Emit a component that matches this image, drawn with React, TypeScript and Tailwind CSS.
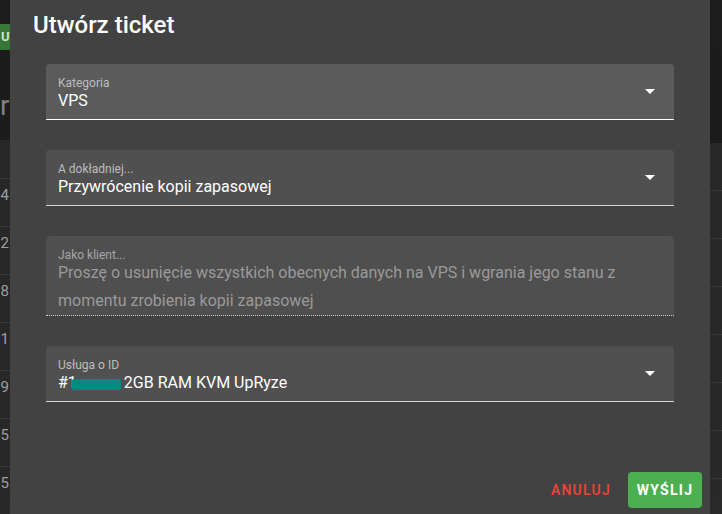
import React from "react";

function Arrow() {
  return (
    <svg width="10" height="5" viewBox="0 0 10 5" className="shrink-0">
      <path d="M0 0 L10 0 L5 5 Z" fill="#ffffff" />
    </svg>
  );
}

function SelectField({
  label,
  children,
  bg,
  line,
}: {
  label: string;
  children: React.ReactNode;
  bg: string;
  line: string;
}) {
  return (
    <div className={`flex h-[56px] items-center rounded-t-[4px] border-b ${bg} ${line} pl-[12px] pr-[19px]`}>
      <div className="flex h-full flex-1 flex-col pt-[11px]">
        <div className="text-[12px] leading-4 text-[#bdbdbd]">{label}</div>
        <div className="whitespace-nowrap text-[16px] leading-5 text-white">{children}</div>
      </div>
      <Arrow />
    </div>
  );
}

export default function App() {
  const leftDigits = ["4", "2", "8", "1", "9", "5", "5"];
  return (
    <div
      className="relative h-[514px] w-[722px] overflow-hidden bg-[#2b2b2b]"
      style={{ fontFamily: "Roboto, 'Noto Sans', sans-serif" }}
    >
      {/* background page */}
      <div className="flex h-full w-full justify-between">
        <div className="flex w-[10px] flex-col overflow-hidden">
          <div className="flex h-[143px] flex-col bg-[#1e1e1e]">
            <div className="mt-[24px] flex h-[26px] items-center bg-[#3b7a3b] pl-[1px] text-[13px] font-bold text-[#d8e8d8]">
              UT
            </div>
            <div className="mt-[40px] whitespace-nowrap text-[28px] leading-8 text-[#8a8a8a]">rC</div>
          </div>
          <div className="h-[39px] bg-[#2b2b2b]" />
          {leftDigits.map((d, i) => (
            <div
              key={i}
              className="h-[48px] shrink-0 border-t border-[#3c3c3c] pt-[6px] text-right text-[15px] leading-5 text-[#a8a8a8]"
            >
              <span className="mr-[1px]">{d}</span>
            </div>
          ))}
        </div>
        <div className="flex w-[12px] flex-col">
          <div className="h-[143px] shrink-0 bg-[#1e1e1e]" />
          {Array.from({ length: 8 }).map((_, i) => (
            <div key={i} className="h-[48px] shrink-0 border-b border-[#3c3c3c] bg-[#2c2c2c]" />
          ))}
        </div>
      </div>

      {/* dialog */}
      <div className="absolute left-[10px] top-0 flex h-[516px] w-[700px] flex-col bg-[#424242] shadow-2xl">
        <div className="pl-[23px] pt-[9px] text-[24px] font-medium leading-8 text-white">Utwórz ticket</div>
        <div className="mt-[23px] flex flex-col gap-[30px] px-[36px]">
          <SelectField label="Kategoria" bg="bg-[#5b5b5b]" line="border-[#ffffff]">
            VPS
          </SelectField>
          <SelectField label="A dokładniej..." bg="bg-[#505050]" line="border-[#d4d4d4]">
            Przywrócenie kopii zapasowej
          </SelectField>
          <div className="flex h-[80px] flex-col rounded-t-[4px] border-b border-dotted border-[#c8c8c8] bg-[#4f4f4f] px-[12px] pt-[11px]">
            <div className="text-[12px] leading-4 text-[#a6a6a6]">Jako klient...</div>
            <div className="mt-[-4px] text-[16px] leading-[28px] text-[#9a9a9a]">
              <div className="whitespace-nowrap">
                Proszę o usunięcie wszystkich obecnych danych na VPS i wgrania jego stanu z
              </div>
              <div className="whitespace-nowrap">momentu zrobienia kopii zapasowej</div>
            </div>
          </div>
          <SelectField label="Usługa o ID" bg="bg-[#505050]" line="border-[#d4d4d4]">
            <span>#1</span>
            <span className="ml-[-5px] mr-[3px] inline-block h-[11px] w-[49px] translate-y-[1px] rounded-[2px] bg-[#008a82] align-middle" />
            <span>2GB RAM KVM UpRyze</span>
          </SelectField>
        </div>
        <div className="flex-1" />
        <div className="flex items-center justify-end gap-[9px] pb-[8px] pr-[8px]">
          <button className="h-[36px] px-[8px] text-[14px] font-medium tracking-[1.25px] text-[#f44336]">
            ANULUJ
          </button>
          <button className="flex h-[36px] w-[74px] items-center justify-center rounded-[4px] bg-[#4caf50] text-[14px] font-bold tracking-[1.25px] text-white">
            WYŚLIJ
          </button>
        </div>
      </div>
    </div>
  );
}
